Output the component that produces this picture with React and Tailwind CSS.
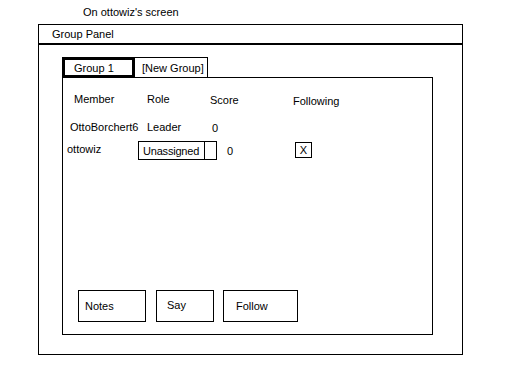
export default function App() {
  return (
    <div
      className="w-[512px] h-[384px] bg-white text-black text-[11px] leading-[14px] overflow-hidden"
      style={{ fontFamily: '"Liberation Sans", Arial, sans-serif' }}
    >
      {/* caption */}
      <div className="pl-[83px] pt-[5px] h-[19px]">On ottowiz's screen</div>

      {/* outer window */}
      <div className="ml-[38px] mt-[5px] w-[425px] h-[331px] border border-black flex flex-col">
        <div className="h-[20px] border-b-2 border-black pl-[13px] flex items-center">Group Panel</div>

        <div className="pl-[23px] pt-[12px]">
          {/* tabs */}
          <div className="flex">
            <div className="w-[73px] h-[21px] border-[3px] border-black pl-[9px] flex items-center">Group 1</div>
            <div className="w-[73px] h-[21px] border-t border-r border-black pl-[7px] flex items-center">[New Group]</div>
          </div>

          {/* panel */}
          <div className="-mt-[1px] w-[371px] h-[258px] border border-black flex flex-col">
            <div className="flex items-start pl-[11px] pt-[14px]">
              <span className="w-[73px]">Member</span>
              <span className="w-[63px]">Role</span>
              <span className="w-[83px] mt-[1px]">Score</span>
              <span className="mt-[2px]">Following</span>
            </div>

            <div className="flex pl-[7px] mt-[12px]">
              <span className="w-[77px]">OttoBorchert6</span>
              <span className="w-[65px]">Leader</span>
              <span className="mt-[1px]">0</span>
            </div>

            <div className="flex items-center pl-[4px] mt-[6px] h-[19px]">
              <span className="w-[71px] -mt-[3px]">ottowiz</span>
              <div className="flex h-[19px] border border-black">
                <span className="w-[66px] pl-[4px] border-r border-black flex items-center tracking-[-0.2px] overflow-hidden whitespace-nowrap">Unassigned</span>
                <span className="w-[11px]" />
              </div>
              <span className="ml-[10px] w-[68px]">0</span>
              <div className="w-[17px] h-[16px] border border-black flex items-center justify-center -mt-[2px]">X</div>
            </div>

            <div className="mt-auto mb-[12px] flex pl-[15px]">
              <div className="w-[68px] h-[32px] border border-black pl-[6px] flex items-center">Notes</div>
              <div className="ml-[10px] w-[58px] h-[32px] border border-black pl-[10px] pb-[2px] flex items-center">Say</div>
              <div className="ml-[9px] w-[75px] h-[32px] border border-black pl-[12px] flex items-center">Follow</div>
            </div>
          </div>
        </div>
      </div>
    </div>
  );
}
